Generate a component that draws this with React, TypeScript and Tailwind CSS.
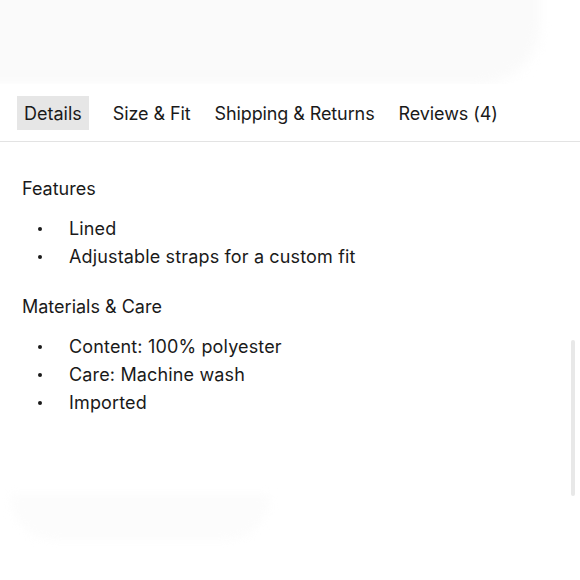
export default function App() {
  const tabs = ["Details", "Size & Fit", "Shipping & Returns", "Reviews (4)"];
  return (
    <div
      className="relative w-[580px] h-[580px] overflow-hidden bg-white text-[#1a1a1a]"
      style={{ fontFamily: "Inter, 'Noto Sans', sans-serif" }}
    >
      {/* faded image area */}
      <div className="relative h-[84px] overflow-hidden">
        <div className="absolute -left-[20px] -top-[20px] w-[560px] h-[104px] rounded-br-[60px] bg-[#fafafa] blur-[6px]" />
      </div>

      {/* tabs */}
      <div className="flex items-center gap-[24px] px-[17px] pt-[12px] pb-[11px] border-b border-[#e3e3e3]">
        {tabs.map((t, i) => (
          <div
            key={t}
            className={
              i === 0
                ? "h-[34px] flex items-center px-[7px] bg-[#e6e6e6] text-[18px]"
                : "h-[34px] flex items-center text-[18px] tracking-[-0.1px]"
            }
          >
            {t}
          </div>
        ))}
      </div>

      {/* content */}
      <div className="px-[22px] pt-[33px] text-[18px]">
        <div className="leading-[28px]">Features</div>
        <ul className="mt-[12px]">
          {["Lined", "Adjustable straps for a custom fit"].map((x) => (
            <li key={x} className="flex items-center leading-[28px]">
              <span className="w-[47px] pl-[16px] flex">
                <span className="w-[4px] h-[4px] rounded-full bg-[#1a1a1a]" />
              </span>
              <span className="tracking-[0.15px]">{x}</span>
            </li>
          ))}
        </ul>
        <div className="mt-[22px] leading-[28px]">Materials &amp; Care</div>
        <ul className="mt-[12px]">
          {["Content: 100% polyester", "Care: Machine wash", "Imported"].map((x) => (
            <li key={x} className="flex items-center leading-[28px]">
              <span className="w-[47px] pl-[16px] flex">
                <span className="w-[4px] h-[4px] rounded-full bg-[#1a1a1a]" />
              </span>
              <span className="tracking-[0.15px]">{x}</span>
            </li>
          ))}
        </ul>
      </div>

      {/* faint shape bottom */}
      <div className="absolute left-[10px] top-[495px] w-[260px] h-[45px] rounded-b-full bg-[#fcfcfc] blur-[4px]" />

      {/* scrollbar thumb */}
      <div className="absolute left-[571px] top-[340px] w-[4px] h-[156px] rounded-full bg-[#e8e8e8]" />
    </div>
  );
}
